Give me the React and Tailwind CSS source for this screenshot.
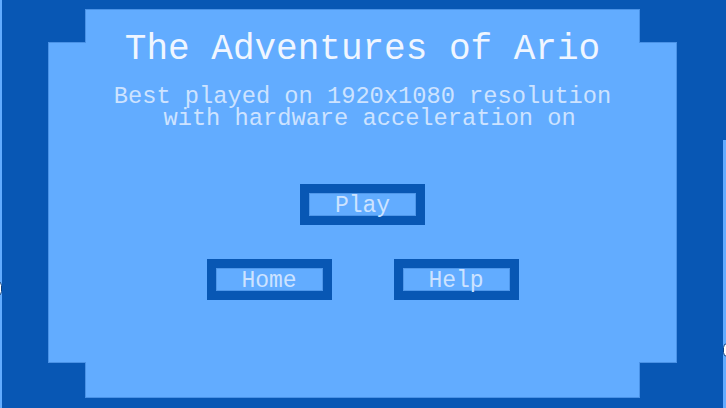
import React from 'react';

const MenuButton = ({ label }) => (
  <button className="h-[41px] w-[125px] border-[9px] border-[#0857b4] bg-[#0857b4] p-0">
    <span className="flex h-full w-full items-center justify-center border border-[#4f97ea] bg-[#62acff] pt-[4px] text-[23px] leading-[21px] text-[#cde3ff]">
      {label}
    </span>
  </button>
);

const App = () => {
  return (
    <div className="flex h-screen w-full overflow-hidden bg-[#0857b4] font-['Liberation_Mono','Courier_New',monospace]">
      {/* left edge strip */}
      <div className="relative w-[2px] shrink-0 bg-[#62acff]">
        <span className="absolute left-[-7px] top-[281px] h-[15px] w-[9px] rounded-full border border-[#0b3f80] bg-white" />
      </div>

      <main className="flex flex-1 justify-center pt-[9px]">
        {/* notched panel: outer layer is the edge line */}
        <div className="h-[389px] w-[629px] bg-[#4a92e6] p-px [clip-path:polygon(37px_0,592px_0,592px_33px,629px_33px,629px_354px,592px_354px,592px_389px,37px_389px,37px_354px,0_354px,0_33px,37px_33px)]">
          <div className="flex h-full w-full flex-col items-center bg-[#62acff] [clip-path:polygon(37px_0,590px_0,590px_33px,627px_33px,627px_352px,590px_352px,590px_387px,37px_387px,37px_352px,0_352px,0_33px,37px_33px)]">
            <h1 className="mt-[20px] text-[36px] leading-[40px] text-[#f0f6ff]">The Adventures of Ario</h1>

            <div className="mt-[16px] text-center text-[23.7px] leading-[22px] text-[#cde3ff]">
              <div className="whitespace-pre">Best played on 1920x1080 resolution</div>
              <div className="whitespace-pre">{'\u00a0with hardware acceleration on'}</div>
            </div>

            <div className="mt-[54px]">
              <MenuButton label="Play" />
            </div>

            <div className="mt-[34px] flex gap-[62px]">
              <MenuButton label="Home" />
              <MenuButton label="Help" />
            </div>
          </div>
        </div>
      </main>

      {/* right edge strip */}
      <div className="relative mt-[140px] w-[3px] shrink-0 bg-[#62acff]">
        <span className="absolute left-0 top-[203px] h-[14px] w-[9px] rounded-full border border-[#0b3f80] bg-white" />
      </div>
    </div>
  );
};

export default App;
